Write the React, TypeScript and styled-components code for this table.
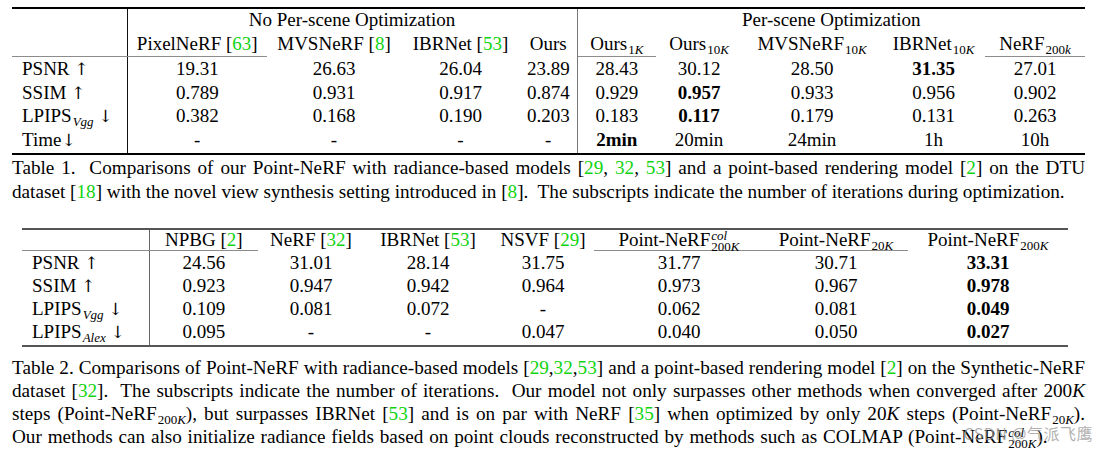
import React from 'react';
import styled, { createGlobalStyle } from 'styled-components';

const Global = createGlobalStyle`
  html, body { margin: 0; padding: 0; background: #fff; }
  body { font-family: "Liberation Serif", "Times New Roman", serif; color: #000; }
`;

const Page = styled.div`
  position: relative;
  width: 1105px;
  height: 453px;
  overflow: hidden;
  box-sizing: border-box;
  padding: 7px 0 0 12px;
`;

const Table = styled.table<{ $width: number; $rule: string; $indent?: number; $top?: number }>`
  border-collapse: collapse;
  table-layout: fixed;
  width: ${p => p.$width}px;
  margin: ${p => p.$top ?? 0}px 0 0 ${p => p.$indent ?? 0}px;
  border-top: 2px solid ${p => p.$rule};
  border-bottom: 2px solid ${p => p.$rule};
  font-size: 19px;
`;

const Th = styled.th<{ $h: number; $rule?: boolean; $sep?: string }>`
  height: ${p => p.$h}px;
  line-height: ${p => p.$h}px;
  padding: 0;
  font-weight: normal;
  text-align: center;
  vertical-align: middle;
  white-space: nowrap;
  border-bottom: 1px solid ${p => (p.$rule ? '#8c8c8c' : 'transparent')};
  border-right: ${p => (p.$sep ? `1px solid ${p.$sep}` : '0')};
`;

const Td = styled.td<{ $h: number; $stub?: boolean; $bold?: boolean; $sep?: string }>`
  height: ${p => p.$h}px;
  line-height: ${p => p.$h}px;
  padding: 0 0 0 ${p => (p.$stub ? 10 : 0)}px;
  text-align: ${p => (p.$stub ? 'left' : 'center')};
  vertical-align: top;
  white-space: nowrap;
  font-weight: ${p => (p.$bold ? 'bold' : 'normal')};
  border-right: ${p => (p.$sep ? `1px solid ${p.$sep}` : '0')};
  tr:last-child > & {
    padding-bottom: 2px;
  }
`;

const Arrow = styled.span`
  font-family: "DejaVu Serif", serif;
  font-size: 17px;
  font-weight: normal;
  line-height: 0;
`;

const Sub = styled.sub`
  font-size: 13px;
  line-height: 0;
  vertical-align: -4px;
  margin-left: 1px;
`;

const Mi = styled.i`
  font-style: italic;
`;

const Scripts = styled.span`
  display: inline-flex;
  flex-direction: column;
  font-size: 13px;
  line-height: 11px;
  vertical-align: 6px;
  text-align: left;
  margin: -9px 0 -9px 1px;
`;

const Cite = styled.span`
  color: #11d411;
`;

const Caption = styled.div<{ $top: number; $lh: number }>`
  margin-top: ${p => p.$top}px;
  width: 1073px;
  font-size: 19.2px;
  line-height: ${p => p.$lh}px;
`;

const Line = styled.div<{ $last?: boolean; $spread?: number }>`
  text-align: justify;
  text-align-last: ${p => (p.$last ? 'left' : 'justify')};
  word-spacing: ${p => (p.$last ? `${p.$spread ?? 0}px` : '-2px')};
  white-space: pre-wrap;
`;

const Watermark = styled.div`
  position: absolute;
  right: 12px;
  bottom: 8px;
  font-family: "Noto Sans CJK SC", "Noto Sans", sans-serif;
  font-size: 16px;
  color: rgba(150, 150, 150, 0.75);
  letter-spacing: 0.5px;
`;

const K = ({ n, v }: { n: string; v: string }) => (
  <Sub>
    {n}
    <Mi>{v}</Mi>
  </Sub>
);

const Up = () => <Arrow>↑</Arrow>;
const Down = () => <Arrow>↓</Arrow>;

const cols1 = [115, 140, 134, 119, 57, 79, 86, 140, 103, 100];
const cols2 = [127, 109, 106, 128, 102, 170, 144, 160];

type Cell = { v: string; b?: boolean };
const t1: { label: React.ReactNode; cells: Cell[] }[] = [
  {
    label: <>PSNR <Up /></>,
    cells: [{ v: '19.31' }, { v: '26.63' }, { v: '26.04' }, { v: '23.89' }, { v: '28.43' }, { v: '30.12' }, { v: '28.50' }, { v: '31.35', b: true }, { v: '27.01' }],
  },
  {
    label: <>SSIM <Up /></>,
    cells: [{ v: '0.789' }, { v: '0.931' }, { v: '0.917' }, { v: '0.874' }, { v: '0.929' }, { v: '0.957', b: true }, { v: '0.933' }, { v: '0.956' }, { v: '0.902' }],
  },
  {
    label: (
      <>
        LPIPS<Sub><Mi>Vgg</Mi></Sub> <Down />
      </>
    ),
    cells: [{ v: '0.382' }, { v: '0.168' }, { v: '0.190' }, { v: '0.203' }, { v: '0.183' }, { v: '0.117', b: true }, { v: '0.179' }, { v: '0.131' }, { v: '0.263' }],
  },
  {
    label: <>Time<Down /></>,
    cells: [{ v: '-' }, { v: '-' }, { v: '-' }, { v: '-' }, { v: '2min', b: true }, { v: '20min' }, { v: '24min' }, { v: '1h' }, { v: '10h' }],
  },
];

const t2: { label: React.ReactNode; cells: Cell[] }[] = [
  {
    label: <>PSNR <Up /></>,
    cells: [{ v: '24.56' }, { v: '31.01' }, { v: '28.14' }, { v: '31.75' }, { v: '31.77' }, { v: '30.71' }, { v: '33.31', b: true }],
  },
  {
    label: <>SSIM <Up /></>,
    cells: [{ v: '0.923' }, { v: '0.947' }, { v: '0.942' }, { v: '0.964' }, { v: '0.973' }, { v: '0.967' }, { v: '0.978', b: true }],
  },
  {
    label: (
      <>
        LPIPS<Sub><Mi>Vgg</Mi></Sub> <Down />
      </>
    ),
    cells: [{ v: '0.109' }, { v: '0.081' }, { v: '0.072' }, { v: '-' }, { v: '0.062' }, { v: '0.081' }, { v: '0.049', b: true }],
  },
  {
    label: (
      <>
        LPIPS<Sub><Mi>Alex</Mi></Sub> <Down />
      </>
    ),
    cells: [{ v: '0.095' }, { v: '-' }, { v: '-' }, { v: '0.047' }, { v: '0.040' }, { v: '0.050' }, { v: '0.027', b: true }],
  },
];

const PointCol = () => (
  <>
    Point-NeRF
    <Scripts>
      <Mi>col</Mi>
      <span>
        200<Mi>K</Mi>
      </span>
    </Scripts>
  </>
);

export default function App() {
  return (
    <>
      <Global />
      <Page>
        <Table $width={1073} $rule="#000">
          <colgroup>
            {cols1.map((w, i) => (
              <col key={i} style={{ width: w }} />
            ))}
          </colgroup>
          <thead>
            <tr>
              <Th $h={22} rowSpan={2} $rule $sep="#111" />
              <Th $h={22} colSpan={4} $sep="#777">
                No Per-scene Optimization
              </Th>
              <Th $h={22} colSpan={5}>
                Per-scene Optimization
              </Th>
            </tr>
            <tr>
              <Th $h={24} $rule>
                PixelNeRF [<Cite>63</Cite>]
              </Th>
              <Th $h={24}>
                MVSNeRF [<Cite>8</Cite>]
              </Th>
              <Th $h={24}>
                IBRNet [<Cite>53</Cite>]
              </Th>
              <Th $h={24} $sep="#777">
                Ours
              </Th>
              <Th $h={24} $rule>
                Ours<K n="1" v="K" />
              </Th>
              <Th $h={24}>
                Ours<K n="10" v="K" />
              </Th>
              <Th $h={24}>
                MVSNeRF<K n="10" v="K" />
              </Th>
              <Th $h={24}>
                IBRNet<K n="10" v="K" />
              </Th>
              <Th $h={24} $rule>
                NeRF<K n="200" v="k" />
              </Th>
            </tr>
          </thead>
          <tbody>
            {t1.map((r, i) => (
              <tr key={i}>
                <Td $h={23.5} $stub $sep="#111">
                  {r.label}
                </Td>
                {r.cells.map((c, j) => (
                  <Td key={j} $h={23.5} $bold={c.b} $sep={j === 3 ? '#777' : undefined}>
                    {c.v}
                  </Td>
                ))}
              </tr>
            ))}
          </tbody>
        </Table>

        <Caption $top={1} $lh={23.5}>
          <Line>
            Table 1.  Comparisons of our Point-NeRF with radiance-based models [<Cite>29</Cite>, <Cite>32</Cite>, <Cite>53</Cite>] and a point-based rendering model [<Cite>2</Cite>] on the DTU
          </Line>
          <Line $last>
            dataset [<Cite>18</Cite>] with the novel view synthesis setting introduced in [<Cite>8</Cite>].  The subscripts indicate the number of iterations during optimization.
          </Line>
        </Caption>

        <Table $width={1046} $rule="#555" $indent={10} $top={25}>
          <colgroup>
            {cols2.map((w, i) => (
              <col key={i} style={{ width: w }} />
            ))}
          </colgroup>
          <thead>
            <tr>
              <Th $h={20} $rule $sep="#666" />
              <Th $h={20} $rule>
                NPBG [<Cite>2</Cite>]
              </Th>
              <Th $h={20}>
                NeRF [<Cite>32</Cite>]
              </Th>
              <Th $h={20}>
                IBRNet [<Cite>53</Cite>]
              </Th>
              <Th $h={20}>
                NSVF [<Cite>29</Cite>]
              </Th>
              <Th $h={20} $rule>
                <PointCol />
              </Th>
              <Th $h={20} $rule>
                Point-NeRF<K n="20" v="K" />
              </Th>
              <Th $h={20}>
                Point-NeRF<K n="200" v="K" />
              </Th>
            </tr>
          </thead>
          <tbody>
            {t2.map((r, i) => (
              <tr key={i}>
                <Td $h={23} $stub $sep="#666">
                  {r.label}
                </Td>
                {r.cells.map((c, j) => (
                  <Td key={j} $h={23} $bold={c.b}>
                    {c.v}
                  </Td>
                ))}
              </tr>
            ))}
          </tbody>
        </Table>

        <Caption $top={9} $lh={23}>
          <Line>
            Table 2. Comparisons of Point-NeRF with radiance-based models [<Cite>29</Cite>,<Cite>32</Cite>,<Cite>53</Cite>] and a point-based rendering model [<Cite>2</Cite>] on the Synthetic-NeRF
          </Line>
          <Line>
            dataset [<Cite>32</Cite>].  The subscripts indicate the number of iterations.  Our model not only surpasses other methods when converged after 200<Mi>K</Mi>
          </Line>
          <Line>
            steps (Point-NeRF<K n="200" v="K" />), but surpasses IBRNet [<Cite>53</Cite>] and is on par with NeRF [<Cite>35</Cite>] when optimized by only 20<Mi>K</Mi> steps (Point-NeRF<K n="20" v="K" />).
          </Line>
          <Line $last $spread={1}>
            Our methods can also initialize radiance fields based on point clouds reconstructed by methods such as COLMAP (<PointCol />).
          </Line>
        </Caption>

        <Watermark>CSDN @气派飞鹰</Watermark>
      </Page>
    </>
  );
}
